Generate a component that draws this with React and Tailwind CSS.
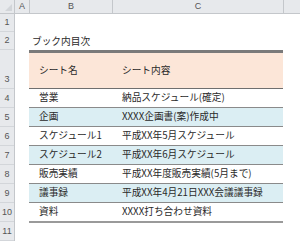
import React from "react";

const rows = [
  ["営業", "納品スケジュール(確定)", false],
  ["企画", "XXXX企画書(案)作成中", true],
  ["スケジュール1", "平成XX年5月スケジュール", false],
  ["スケジュール2", "平成XX年6月スケジュール", true],
  ["販売実績", "平成XX年度販売実績(5月まで)", false],
  ["議事録", "平成XX年4月21日XXX会議議事録", true],
  ["資料", "XXXX打ち合わせ資料", false],
];

const rowHeads = [
  ["1", "h-[18px]"],
  ["2", "h-[18px]"],
  ["3", "h-[39px]"],
  ["4", "h-[19px]"],
  ["5", "h-[19px]"],
  ["6", "h-[19px]"],
  ["7", "h-[19px]"],
  ["8", "h-[19px]"],
  ["9", "h-[19px]"],
  ["10", "h-[19px]"],
  ["11", "h-[19px]"],
];

export default function App() {
  return (
    <div className="w-[300px] h-[242px] overflow-hidden bg-white text-[#2a2a2a] font-['Noto_Sans_CJK_JP',sans-serif]">
      {/* column headers */}
      <div className="flex h-[14px] bg-[#e7e9ec] border-b border-[#c4c7cb] text-[9px] text-[#555] font-['Liberation_Sans',sans-serif] leading-none">
        <div className="w-[15px] shrink-0 border-r border-[#c4c7cb] flex items-end justify-end p-[2px]">
          <svg width="7" height="7" viewBox="0 0 7 7">
            <polygon points="7,0 7,7 0,7" fill="#d2d5d9" />
          </svg>
        </div>
        <div className="w-[15px] shrink-0 border-r border-[#c4c7cb] flex items-center justify-center">A</div>
        <div className="w-[83px] shrink-0 border-r border-[#c4c7cb] flex items-center justify-center">B</div>
        <div className="w-[171px] shrink-0 border-r border-[#c4c7cb] flex items-center justify-center">C</div>
        <div className="flex-1" />
      </div>
      <div className="flex">
        {/* row headers */}
        <div className="w-[15px] shrink-0 flex flex-col bg-[#e7e9ec] border-r border-[#c4c7cb] text-[9px] text-[#555] font-['Liberation_Sans',sans-serif] leading-none">
          {rowHeads.map(([n, h]) => (
            <div key={n} className={`${h} shrink-0 border-b border-[#d3d6da] flex items-end justify-center pb-[4px]`}>
              {n}
            </div>
          ))}
        </div>
        {/* sheet */}
        <div className="flex flex-col pl-[14px] text-[9.7px] leading-none">
          <div className="h-[18px]" />
          <div className="h-[18px] flex items-end pl-[3px] pb-[3px]">ブック内目次</div>
          <div className="w-[254px] flex flex-col">
            <div className="h-[39px] flex bg-[#fce6d8] border-t-[3px] border-[#7a7a7a] border-b border-b-[#6f6f6f] items-center">
              <div className="w-[83px] pl-[10px]">シート名</div>
              <div className="flex-1 pl-[10px]">シート内容</div>
            </div>
            {rows.map(([a, b, blue], i) => (
              <div
                key={i}
                className={`flex items-center ${i === rows.length - 1 ? "h-[20px] border-b-[2px] border-[#9a9a9a]" : "h-[19px] border-b border-[#8a8a8a]"} ${blue ? "bg-[#dbeef3]" : "bg-white"}`}
              >
                <div className="w-[83px] pl-[10px]">{a}</div>
                <div className="flex-1 pl-[10px]">{b}</div>
              </div>
            ))}
          </div>
        </div>
      </div>
    </div>
  );
}
